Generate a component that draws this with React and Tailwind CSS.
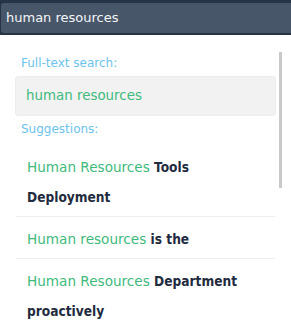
export default function App() {
  const font = { fontFamily: '"DejaVu Sans", Verdana, sans-serif' };
  const items = [
    ["Human Resources", "Tools Deployment"],
    ["Human resources", "is the"],
    ["Human Resources", "Department proactively"],
  ];
  return (
    <div className="w-[291px] h-[330px] bg-white overflow-hidden relative" style={font}>
      <div className="bg-[#263446] pt-[3px] pl-[1px] pb-[2px]">
        <div className="h-[30px] bg-[#485669] rounded-l-[3px] flex items-center pl-[5px] text-[13px] text-[#f4f6f8]">
          human resources
        </div>
      </div>
      <div className="relative px-[15px] pt-[19px]">
        <div className="absolute right-[9px] top-[17px] w-[3px] h-[136px] bg-[#c9c9c9]" />
        <div className="pl-[6px] text-[12px] leading-[18px] text-[#6cc3ee]">Full-text search:</div>
        <div className="mt-[4px] h-[40px] rounded-[4px] bg-[#f2f2f2] border border-dotted border-[#e6e6e6] flex items-center pl-[10px] text-[13.4px] text-[#3dba7c]">
          human resources
        </div>
        <div className="mt-[4px] pl-[6px] text-[12px] leading-[18px] text-[#6cc3ee]">Suggestions:</div>
        <div className="mt-[7px]">
          {items.map(([a, b], i) => (
            <div key={i} className="pl-[11px] pr-[8px] pt-[7px] pb-[4px] border-b border-[#efefef] text-[13.6px] leading-[30px] mx-[1px]">
              <span className="text-[#3dba7c]">{a}</span>{" "}
              <span className="font-bold text-[#1f2b3e] font-['DejaVu_Sans_Condensed','DejaVu_Sans',sans-serif]">{b}</span>
            </div>
          ))}
        </div>
      </div>
    </div>
  );
}
